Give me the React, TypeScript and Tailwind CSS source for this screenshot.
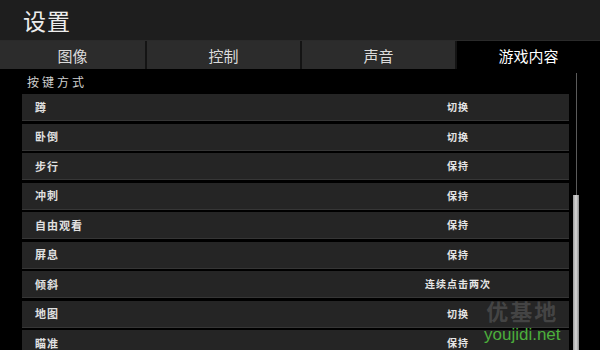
import React from "react";

const rows: [string, string][] = [
  ["蹲", "切换"],
  ["卧倒", "切换"],
  ["步行", "保持"],
  ["冲刺", "保持"],
  ["自由观看", "保持"],
  ["屏息", "保持"],
  ["倾斜", "连续点击两次"],
  ["地图", "切换"],
  ["瞄准", "保持"],
];

const tabs = [
  { label: "图像", w: "w-[145px]", active: false },
  { label: "控制", w: "w-[153px]", active: false },
  { label: "声音", w: "w-[153px]", active: false },
  { label: "游戏内容", w: "flex-1", active: true },
];

export default function App() {
  return (
    <div
      className="relative w-[600px] h-[350px] overflow-hidden bg-black flex flex-col text-[#e6e6e6]"
      style={{ fontFamily: "'Noto Sans CJK SC', 'Noto Sans', sans-serif" }}
    >
      <div className="h-[40px] shrink-0 bg-[#1e1e1e] pl-[23px] flex items-center text-[23px] leading-none tracking-[1px] text-[#ededed]">
        设置
      </div>
      <div className="h-[29px] shrink-0 flex gap-[2px] bg-[#141414] border-t border-[#2a2a2a]">
        {tabs.map((t) => (
          <div
            key={t.label}
            className={`${t.w} flex items-center justify-center text-[15px] leading-none ${
              t.active ? "bg-black text-white" : "bg-[#2c2c2c] text-[#dcdcdc]"
            }`}
          >
            {t.label}
          </div>
        ))}
      </div>
      <div className="flex-1 flex min-h-0">
        <div className="w-[569px] pl-[22px] flex flex-col">
          <div className="h-[25px] shrink-0 pl-[5px] flex items-center text-[12px] leading-none tracking-[3px] text-[#d0d0d0]">
            按键方式
          </div>
          <div className="shrink-0 flex flex-col gap-[2.5px]">
            {rows.map(([k, v]) => (
              <div
                key={k}
                className="h-[27px] shrink-0 flex items-center bg-[#252525] border-b border-[#363636] text-[11px] font-bold leading-none"
              >
                <div className="pl-[13px] tracking-[1px] text-[#e0e0e0] flex-1">{k}</div>
                <div className="w-[222px] text-center text-[10px] tracking-[1px] text-[#e6e6e6]">{v}</div>
              </div>
            ))}
          </div>
        </div>
        <div className="w-[6px] ml-[4px] flex flex-col items-center pt-[4px]">
          <div className="w-px h-[122px] bg-[#5a5a5a]" />
          <div className="w-[6px] flex-1 bg-gradient-to-r from-[#9a9a9a] via-[#d8d8d8] to-[#8a8a8a]" />
        </div>
      </div>
      <div className="absolute left-[484px] top-[299px] flex flex-col items-center leading-none">
        <div className="text-[22px] font-bold text-[#5a5a5a] opacity-60 tracking-[2px]">优基地</div>
        <div
          className="text-[17px] text-[#4caf3c] mt-[5px]"
          style={{ fontFamily: "'Liberation Sans', Arial, sans-serif" }}
        >
          youjidi.net
        </div>
      </div>
    </div>
  );
}
